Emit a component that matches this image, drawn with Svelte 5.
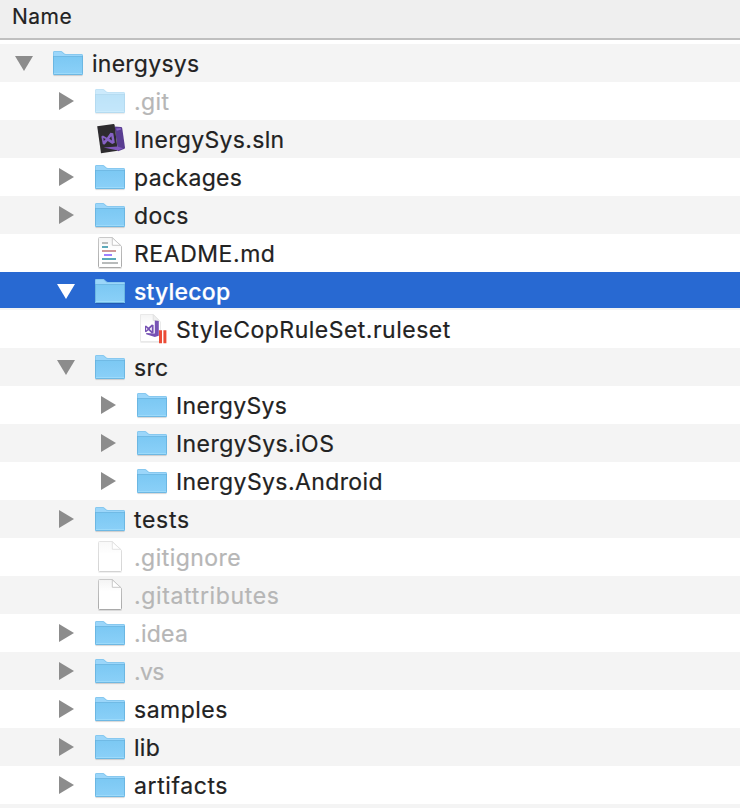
<script>
  const rows = [
    { name: 'inergysys', depth: 0, kind: 'folder', open: true, tracking: 0.25 },
    { name: '.git', depth: 1, kind: 'folder', open: false, dim: true, faded: true, tracking: 0.4 },
    { name: 'InergySys.sln', depth: 1, kind: 'solution', tracking: 0.33 },
    { name: 'packages', depth: 1, kind: 'folder', open: false, tracking: 0.35 },
    { name: 'docs', depth: 1, kind: 'folder', open: false, tracking: 0.4 },
    { name: 'README.md', depth: 1, kind: 'markdown', tracking: 0.55 },
    { name: 'stylecop', depth: 1, kind: 'folder', open: true, selected: true, tracking: 0.2 },
    { name: 'StyleCopRuleSet.ruleset', depth: 2, kind: 'ruleset', tracking: 0.49 },
    { name: 'src', depth: 1, kind: 'folder', open: true, tracking: 0.3 },
    { name: 'InergySys', depth: 2, kind: 'folder', open: false, tracking: 0.33 },
    { name: 'InergySys.iOS', depth: 2, kind: 'folder', open: false, tracking: 0.42 },
    { name: 'InergySys.Android', depth: 2, kind: 'folder', open: false, tracking: 0.4 },
    { name: 'tests', depth: 1, kind: 'folder', open: false, tracking: 0.7 },
    { name: '.gitignore', depth: 1, kind: 'file', dim: true, faded: true, tracking: 0.45 },
    { name: '.gitattributes', depth: 1, kind: 'file', dim: true, tracking: 0.65 },
    { name: '.idea', depth: 1, kind: 'folder', open: false, dim: true, tracking: 0.25 },
    { name: '.vs', depth: 1, kind: 'folder', open: false, dim: true, tracking: -0.6 },
    { name: 'samples', depth: 1, kind: 'folder', open: false, tracking: 0.5 },
    { name: 'lib', depth: 1, kind: 'folder', open: false, tracking: 0.3 },
    { name: 'artifacts', depth: 1, kind: 'folder', open: false, tracking: 0.6 }
  ];
</script>

<svg class="defs" width="0" height="0" aria-hidden="true">
  <defs>
    <linearGradient id="folder-front" x1="0" y1="0" x2="0" y2="1">
      <stop offset="0" stop-color="#7bc8f3" />
      <stop offset="1" stop-color="#8bd0f8" />
    </linearGradient>
    <linearGradient id="paper" x1="0" y1="0" x2="0" y2="1">
      <stop offset="0" stop-color="#f4f4f4" />
      <stop offset=".4" stop-color="#ffffff" />
    </linearGradient>
    <linearGradient id="edge" x1="0" y1="0" x2="0" y2="1">
      <stop offset="0" stop-color="#c9c9c9" />
      <stop offset="1" stop-color="#a9a9a9" />
    </linearGradient>
  </defs>
</svg>

{#snippet page()}
  <path d="M4.5 34.3h23" stroke="#000" stroke-opacity=".14" />
  <path d="M5.5 3.5H18.3L27.5 12.3V32.5Q27.5 33.5 26.5 33.5H5.5Q4.5 33.5 4.5 32.5V4.5Q4.5 3.5 5.5 3.5z" fill="url(#paper)" stroke="url(#edge)" />
  <path d="M18.3 3.8V11.3H26.5z" fill="#fff" stroke="#c4c4c4" stroke-width=".9" />
{/snippet}

<main>
  <header>Name</header>
  <div class="list" role="tree">
    {#each rows as row}
      <div class="row" class:selected={row.selected} class:dim={row.dim} role="treeitem" aria-selected={!!row.selected}>
        <span class="indent" style:width="{row.depth * 42}px"></span>
        <svg class="arrow" width="20" height="38" viewBox="0 0 20 38">
          {#if row.open === true}
            <path d="M1 12h18l-9 15z" />
          {:else if row.open === false}
            <path d="M3 10v18l15-9z" />
          {/if}
        </svg>
        <svg class="icon" class:faded={row.faded} width="32" height="38" viewBox="0 0 32 38">
          {#if row.kind === 'folder'}
            <path d="M1.5 31.6h29" stroke="#000" stroke-opacity=".16" />
            <path d="M1 8.4Q1 7 2.4 7H9.2Q10 7 10.6 7.7L12.5 9.6Q13 10 13.8 10H29.8Q31 10 31 11.2V30Q31 31 30 31H2Q1 31 1 30z" fill="#9bd6fa" />
            <path d="M1 12h30v18q0 1-1 1H2q-1 0-1-1z" fill="url(#folder-front)" />
            <path d="M1.4 12.5h29.2" stroke="#70bae5" />
            <path d="M1.5 29.5h29" stroke="#9cdafa" />
            <path d="M1.5 12v17.6q0 .9.9.9h27.2q.9 0 .9-.9V12" fill="none" stroke="#62aeda" stroke-opacity=".7" />
            <path d="M1.5 12V8.4Q1.5 7.5 2.4 7.5H9.2L12.4 10.2Q13 10.5 13.8 10.5H29.6Q30.5 10.5 30.5 12" fill="none" stroke="#62aeda" stroke-opacity=".35" />
          {:else if row.kind === 'file'}
            {@render page()}
          {:else if row.kind === 'markdown'}
            {@render page()}
            <g fill="none" stroke-width="2">
              <path d="M8 9h6" stroke="#b8bbbb" />
              <path d="M8 13h6" stroke="#5ca9b9" />
              <path d="M8 17h14" stroke="#cf999a" />
              <path d="M10 21h8" stroke="#9e80ff" />
              <path d="M8 25h14" stroke="#5ca9b9" />
              <path d="M8 29h16" stroke="#b8bbbb" />
            </g>
          {:else if row.kind === 'solution'}
            <path d="M20.5 6.5L27 7Q28 7.2 28.2 8L31 27.5Q31 28.6 30 29L24 31.3z" fill="#593d91" />
            <path d="M3.2 6.3L19.5 4.1Q20.4 4 20.6 5L23.8 30.8 7 33.2z" fill="#2d2b2e" />
            <path d="M22 8.5l4.6-.5.6 1.6-4.4 1.2z" fill="#8661c5" />
            <path d="M9.5 27.4l13.8-1 5.7 1.8-5.2 2.2z" fill="#8058bd" />
            <path fill-rule="evenodd" d="M7.3 16.4l1.6-1 4 2.4 3.5-5 2.9.4 1.5 9.6-2.6 1.3-4.5-3.2-3 3.7-1.9-.4zM9.3 17.9l.5 3 1.9-1.8zM17.3 16.2l-2 2.6 2.7 1.8z" fill="#8661c5" />
          {:else}
            <path d="M4.5 32.2h19" stroke="#000" stroke-opacity=".1" />
            <path d="M4.5 4.5h12.7L24.5 12v19.5h-20z" fill="url(#paper)" stroke="#e4e4e4" stroke-width=".8" />
            <path d="M17.2 4.5V10.5h6z" fill="#eee" stroke="#ddd" stroke-width=".8" />
            <path d="M18.8 10.5l4 .6v14.6l-4 1.2-8.6-2.6v-1.2l8.6.5z" fill="#7652b4" />
            <path fill-rule="evenodd" d="M9 16l1-.4 2.5 2 3.3-3.2 1.8.7v7.6l-1.8.7-3.3-3.2-2.5 2-1-.4zM10.2 17.6v2.8l1.4-1.4zM15.8 16.8L13.7 19l2.1 2z" fill="#7652b4" />
            <path d="M23 20.3h3v13H23zM27.4 20.3h3v13h-3z" fill="#eb4b36" />
          {/if}
        </svg>
        <span class="name" style:letter-spacing="{row.tracking}px">{row.name}</span>
      </div>
    {/each}
  </div>
</main>

<style>
  :global(body) { overflow: hidden; }
  .defs { position: absolute; }
  main {
    width: 740px;
    height: 808px;
    overflow: hidden;
    display: flex;
    flex-direction: column;
    background: #fff;
    font-family: Inter, "Liberation Sans", sans-serif;
    font-size: 23px;
    color: #222;
    -webkit-text-stroke: .2px currentColor;
  }
  header {
    box-sizing: border-box;
    height: 40px;
    flex: none;
    padding-left: 12px;
    border-bottom: 2px solid #bfbfbf;
    background: #efefef;
    font-size: 21px;
    line-height: 33px;
    letter-spacing: .5px;
  }
  .list {
    flex: 1;
    margin-top: 4px;
    background: repeating-linear-gradient(#f4f4f4 0 38px, #fff 38px 76px);
  }
  .row {
    display: flex;
    height: 38px;
    padding-left: 14px;
  }
  .indent { flex: none; }
  .arrow { flex: none; fill: #8c8c8c; }
  .icon { flex: none; margin-left: 18px; }
  .faded { opacity: .5; }
  .name {
    margin-left: 8px;
    line-height: 41px;
    white-space: pre;
  }
  .dim { color: #b6b6b6; }
  .selected {
    background: linear-gradient(#2869d2 0 36px, #f4f4f4 36px);
    color: #fff;
    font-weight: 500;
  }
  .selected .arrow { fill: #fff; }
</style>
